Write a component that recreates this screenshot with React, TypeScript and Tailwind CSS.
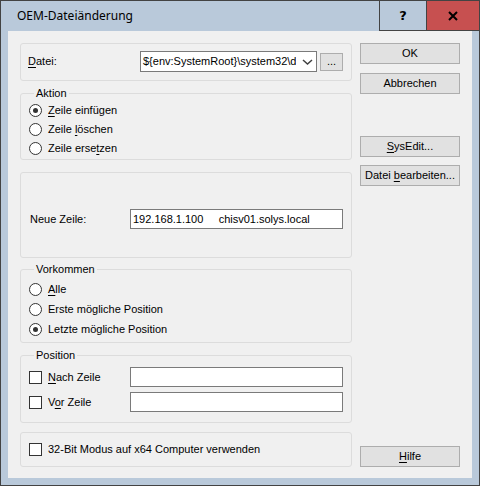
import React from "react";

type Kids = { children?: React.ReactNode; className?: string };

// Underlined access key letter
const Key = ({ children }: Kids) => (
  <span className="underline decoration-1 underline-offset-[2px]">{children}</span>
);

const Button = ({ children, className = "" }: Kids) => (
  <button
    className={`w-[100px] h-[21px] shrink-0 border border-[#adadad] bg-[#e1e1e1] flex items-center justify-center text-[11px] leading-none text-black ${className}`}
  >
    <span className="whitespace-pre">{children}</span>
  </button>
);

const Radio = ({ checked, label, h }: { checked?: boolean; label: React.ReactNode; h: string }) => (
  <div className={`flex items-center ${h}`}>
    <span className="w-[13px] h-[13px] rounded-full border border-[#333333] bg-white flex items-center justify-center">
      {checked && <span className="w-[5px] h-[5px] rounded-full bg-[#333333]" />}
    </span>
    <span className="ml-[6px]">{label}</span>
  </div>
);

const Check = () => <span className="w-[13px] h-[13px] shrink-0 border border-[#333333] bg-white" />;

const TextBox = ({ children }: Kids) => (
  <div className="w-[213px] h-[20px] border border-[#7a7a7a] bg-white flex items-center pl-[2px] whitespace-pre">
    {children}
  </div>
);

const Group = ({ legend, className = "", children }: Kids & { legend: string }) => (
  <fieldset className={`border border-[#dcdcdc] rounded-[3px] min-w-0 ${className}`}>
    <legend className="ml-[5px] px-[2px] text-[11px] leading-[13px]">{legend}</legend>
    {children}
  </fieldset>
);

export default function App() {
  return (
    <div className="w-[480px] h-[486px] border border-[#434343] bg-[#b9c9da] flex flex-col font-['Liberation_Sans',Arial,sans-serif] text-[11px] text-black">
      {/* title bar */}
      <div className="h-[30px] shrink-0 flex items-stretch">
        <div className="flex-1 flex items-center pl-[16px] text-[12px] font-['Noto_Sans',sans-serif]">
          OEM-Dateiänderung
        </div>
        <div className="w-[47px] border-l border-b border-[#434343] flex items-center justify-center font-bold text-[13px] font-['DejaVu_Sans',sans-serif]">
          ?
        </div>
        <div className="w-[53px] border-l border-b border-[#434343] bg-[#c75050] flex items-center justify-center">
          <svg width="10" height="10" viewBox="0 0 10 10">
            <path d="M1 1 L9 9 M9 1 L1 9" stroke="#000" strokeWidth="2" />
          </svg>
        </div>
      </div>

      {/* client area */}
      <div className="mx-[7px] h-[447px] shrink-0 bg-[#f0f0f0] flex gap-[8px] px-[12px] pt-[12px] pb-[11px]">
        <div className="w-[332px] flex flex-col">
          <div className="h-[38px] border border-[#dcdcdc] rounded-[3px] flex items-start pl-[7px] pt-[7px]">
            <div className="flex items-center h-[21px]">
              <span className="w-[112px]">
                <Key>D</Key>atei:
              </span>
              <div className="w-[177px] h-[21px] border border-[#7a7a7a] bg-white flex items-center overflow-hidden">
                <div className="w-[155px] shrink-0 pl-[2px] overflow-hidden">
                  <span className="block w-max">{"${env:SystemRoot}\\system32\\dr"}</span>
                </div>
                <svg width="17" height="19" viewBox="0 0 17 19" className="ml-auto shrink-0">
                  <path d="M4 8 L8.5 12 L13 8" fill="none" stroke="#404040" strokeWidth="1.5" />
                </svg>
              </div>
              <div className="ml-[3px] w-[23px] h-[18px] border border-[#adadad] bg-[#e1e1e1] flex items-end justify-center pb-[3px] leading-none">
                ...
              </div>
            </div>
          </div>

          <Group legend="Aktion" className="mt-[6px] pt-[1px] pb-[1px] pl-[8px]">
            <Radio h="h-[19px]" checked label={<><Key>Z</Key>eile einfügen</>} />
            <Radio h="h-[19px]" label={<>Zeile <Key>l</Key>öschen</>} />
            <Radio h="h-[19px]" label={<>Zeile erse<Key>t</Key>zen</>} />
          </Group>

          <div className="mt-[12px] h-[86px] border border-[#dcdcdc] rounded-[3px] pt-[36px] pl-[9px]">
            <div className="flex items-center">
              <span className="w-[100px]">Neue Zeile:</span>
              <TextBox>{"192.168.1.100     chisv01.solys.local"}</TextBox>
            </div>
          </div>

          <Group legend="Vorkommen" className="mt-[5px] pt-[3px] pb-[3px] pl-[8px]">
            <Radio h="h-[20px]" label={<><Key>A</Key>lle</>} />
            <Radio h="h-[20px]" label="Erste mögliche Position" />
            <Radio h="h-[20px]" checked label="Letzte mögliche Position" />
          </Group>

          <Group legend="Position" className="mt-[6px] pt-[5px] pb-[10px] pl-[8px]">
            <div className="flex items-center h-[20px]">
              <Check />
              <span className="ml-[6px] w-[82px]">
                <Key>N</Key>ach Zeile
              </span>
              <TextBox />
            </div>
            <div className="flex items-center h-[20px] mt-[5px]">
              <Check />
              <span className="ml-[6px] w-[82px]">
                V<Key>o</Key>r Zeile
              </span>
              <TextBox />
            </div>
          </Group>

          <div className="mt-[9px] h-[35px] border border-[#dcdcdc] rounded-[3px] flex items-center pl-[8px]">
            <Check />
            <span className="ml-[6px]">32-Bit Modus auf x64 Computer verwenden</span>
          </div>
        </div>

        <div className="w-[100px] flex flex-col">
          <Button>OK</Button>
          <Button className="mt-[9px]">Abbrechen</Button>
          <Button className="mt-[42px]">
            <Key>S</Key>ysEdit...
          </Button>
          <Button className="mt-[8px]">
            Datei <Key>b</Key>earbeiten...
          </Button>
          <Button className="mt-auto">
            <Key>H</Key>ilfe
          </Button>
        </div>
      </div>
    </div>
  );
}
